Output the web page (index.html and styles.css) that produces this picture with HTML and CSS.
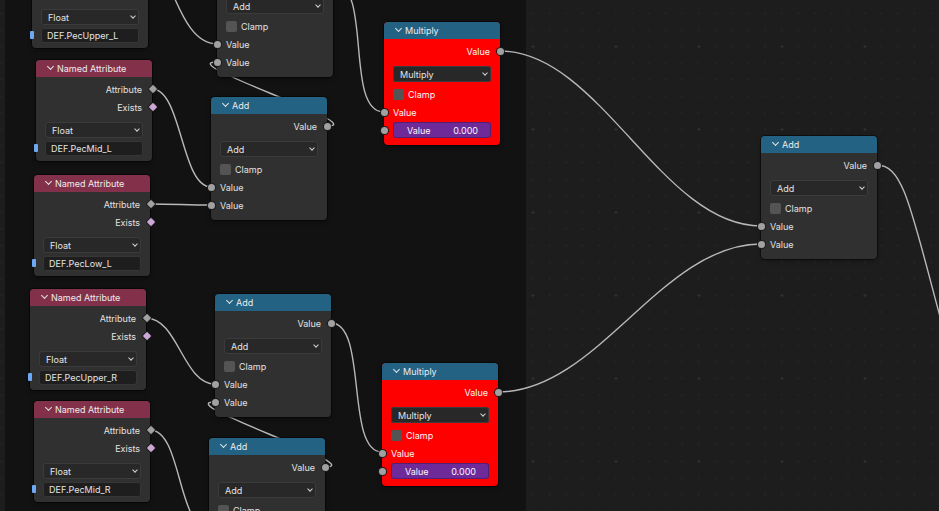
FILE: index.html
```html
<!DOCTYPE html>
<html lang="en">
  <head>
    <meta charset="utf-8">
    <title>Geometry Nodes</title>
    <link rel="stylesheet" href="styles.css">
  </head>
  <body>
    <div class="editor">
      <!-- frame behind the named attribute column -->
      <div class="frame"></div>

      <!-- links, drawn under the nodes -->
      <svg class="wires" width="939" height="511" viewBox="0 0 939 511">
        <path d="M170 -12 C180 10, 192 44, 217 44"/>
        <path d="M327 126 C372 126, 172 62, 217 62"/>
        <path d="M152 89 C182 89, 181 187, 211 187"/>
        <path d="M150 204 C175 204, 186 205, 211 205"/>
        <path d="M146 318 C178 318, 183 384, 215 384"/>
        <path d="M150 430 C182 430, 177 528, 209 528"/>
        <path d="M333 -17 C373 -17, 344 112, 384 112"/>
        <path d="M331 323 C368 323, 345 452, 382 452"/>
        <path d="M325 467 C370 467, 170 402, 215 402"/>
        <path d="M500 51 C600 51, 661 226, 761 226"/>
        <path d="M498 392 C598 392, 661 244, 761 244"/>
        <path d="M877 165 C905 165, 912 215, 945 335"/>
      </svg>

      <!-- Named Attribute nodes -->
      <div class="node named pec-upper-l">
        <div class="node-head"><span class="fold"></span>Named Attribute</div>
        <div class="node-body">
          <div class="row out">Attribute<i class="sock diamond"></i></div>
          <div class="row out">Exists<i class="sock diamond bool"></i></div>
          <div class="menu">Float</div>
          <div class="field"><i class="pin"></i>DEF.PecUpper_L</div>
        </div>
      </div>

      <div class="node named pec-mid-l">
        <div class="node-head"><span class="fold"></span>Named Attribute</div>
        <div class="node-body">
          <div class="row out">Attribute<i class="sock diamond"></i></div>
          <div class="row out">Exists<i class="sock diamond bool"></i></div>
          <div class="menu">Float</div>
          <div class="field"><i class="pin"></i>DEF.PecMid_L</div>
        </div>
      </div>

      <div class="node named pec-low-l">
        <div class="node-head"><span class="fold"></span>Named Attribute</div>
        <div class="node-body">
          <div class="row out">Attribute<i class="sock diamond"></i></div>
          <div class="row out">Exists<i class="sock diamond bool"></i></div>
          <div class="menu">Float</div>
          <div class="field"><i class="pin"></i>DEF.PecLow_L</div>
        </div>
      </div>

      <div class="node named pec-upper-r">
        <div class="node-head"><span class="fold"></span>Named Attribute</div>
        <div class="node-body">
          <div class="row out">Attribute<i class="sock diamond"></i></div>
          <div class="row out">Exists<i class="sock diamond bool"></i></div>
          <div class="menu">Float</div>
          <div class="field"><i class="pin"></i>DEF.PecUpper_R</div>
        </div>
      </div>

      <div class="node named pec-mid-r">
        <div class="node-head"><span class="fold"></span>Named Attribute</div>
        <div class="node-body">
          <div class="row out">Attribute<i class="sock diamond"></i></div>
          <div class="row out">Exists<i class="sock diamond bool"></i></div>
          <div class="menu">Float</div>
          <div class="field"><i class="pin"></i>DEF.PecMid_R</div>
        </div>
      </div>

      <!-- Math: Add -->
      <div class="node math add-1">
        <div class="node-head"><span class="fold"></span>Add</div>
        <div class="node-body">
          <div class="row out">Value<i class="sock"></i></div>
          <div class="menu">Add</div>
          <div class="row check"><span class="box"></span>Clamp</div>
          <div class="row in"><i class="sock"></i>Value</div>
          <div class="row in"><i class="sock"></i>Value</div>
        </div>
      </div>

      <div class="node math add-2">
        <div class="node-head"><span class="fold"></span>Add</div>
        <div class="node-body">
          <div class="row out">Value<i class="sock"></i></div>
          <div class="menu">Add</div>
          <div class="row check"><span class="box"></span>Clamp</div>
          <div class="row in"><i class="sock"></i>Value</div>
          <div class="row in"><i class="sock"></i>Value</div>
        </div>
      </div>

      <div class="node math add-3">
        <div class="node-head"><span class="fold"></span>Add</div>
        <div class="node-body">
          <div class="row out">Value<i class="sock"></i></div>
          <div class="menu">Add</div>
          <div class="row check"><span class="box"></span>Clamp</div>
          <div class="row in"><i class="sock"></i>Value</div>
          <div class="row in"><i class="sock"></i>Value</div>
        </div>
      </div>

      <div class="node math add-4">
        <div class="node-head"><span class="fold"></span>Add</div>
        <div class="node-body">
          <div class="row out">Value<i class="sock"></i></div>
          <div class="menu">Add</div>
          <div class="row check"><span class="box"></span>Clamp</div>
          <div class="row in"><i class="sock"></i>Value</div>
          <div class="row in"><i class="sock"></i>Value</div>
        </div>
      </div>

      <div class="node math add-sum">
        <div class="node-head"><span class="fold"></span>Add</div>
        <div class="node-body">
          <div class="row out">Value<i class="sock"></i></div>
          <div class="menu">Add</div>
          <div class="row check"><span class="box"></span>Clamp</div>
          <div class="row in"><i class="sock"></i>Value</div>
          <div class="row in"><i class="sock"></i>Value</div>
        </div>
      </div>

      <!-- Math: Multiply (custom red colour) -->
      <div class="node math tint mul-l">
        <div class="node-head"><span class="fold"></span>Multiply</div>
        <div class="node-body">
          <div class="row out">Value<i class="sock"></i></div>
          <div class="menu">Multiply</div>
          <div class="row check"><span class="box"></span>Clamp</div>
          <div class="row in"><i class="sock"></i>Value</div>
          <div class="row in"><i class="sock"></i><div class="slider"><span>Value</span><span>0.000</span></div></div>
        </div>
      </div>

      <div class="node math tint mul-r">
        <div class="node-head"><span class="fold"></span>Multiply</div>
        <div class="node-body">
          <div class="row out">Value<i class="sock"></i></div>
          <div class="menu">Multiply</div>
          <div class="row check"><span class="box"></span>Clamp</div>
          <div class="row in"><i class="sock"></i>Value</div>
          <div class="row in"><i class="sock"></i><div class="slider"><span>Value</span><span>0.000</span></div></div>
        </div>
      </div>
    </div>
  </body>
</html>
```

FILE: styles.css
```css
*{
  box-sizing: border-box;
}

body{
  margin: 0;
  background: #1d1d1d;
  font-family: Inter, "DejaVu Sans", sans-serif;
  font-size: 9px;
  color: #e2e2e2;
  overflow: hidden;
}

/* Canvas with the dotted grid, a bigger dot every fifth step */
.editor{
  position: relative;
  width: 939px;
  height: 511px;
  overflow: hidden;
  background-color: #1d1d1d;
  background-image:
    radial-gradient(circle, #303030 1px, transparent 1.5px),
    radial-gradient(circle, #262626 0.8px, transparent 1.2px);
  background-size: 83px 83px, 16.6px 16.6px;
  background-position: -6.5px 5px, -6.5px 5px;
}

.frame{
  position: absolute;
  left: 5px;
  top: -10px;
  width: 521px;
  height: 540px;
  background: #121212;
}

.wires{
  position: absolute;
  left: 0;
  top: 0;
  overflow: visible;
}

.wires path{
  fill: none;
  stroke: #b8b8b8;
  stroke-width: 1.4;
}

/* Nodes */
.node{
  position: absolute;
  width: 116px;
  background: #303030;
  border-radius: 4px;
  box-shadow: 0 0 0 1px rgba(0,0,0,.45), 0 2px 5px rgba(0,0,0,.3);
}

.node-head{
  position: relative;
  height: 17px;
  display: flex;
  align-items: center;
  padding-left: 21px;
  border-radius: 4px 4px 0 0;
  color: #ececec;
}

.named .node-head{
  background: #83314a;
}

.math .node-head{
  background: #246283;
}

.fold{
  position: absolute;
  left: 11.5px;
  top: 3.5px;
  width: 5px;
  height: 5px;
  border-right: 1px solid #e4e4e4;
  border-bottom: 1px solid #e4e4e4;
  transform: rotate(45deg);
}

.node-body{
  padding: 3px 0 5px;
}

.math .node-body{
  padding-bottom: 6px;
}

.tint{
  background: #ff0000;
  color: #f6f6f6;
}

.row{
  position: relative;
  height: 18px;
  display: flex;
  align-items: center;
  padding: 0 10px 0 9px;
}

.row.out{
  justify-content: flex-end;
}

/* Sockets sit on the node edge */
.sock{
  position: absolute;
  top: 50%;
  width: 7px;
  height: 7px;
  margin-top: -3.5px;
  border-radius: 50%;
  background: #a1a1a1;
  box-shadow: 0 0 0 1px #1c1c1c;
}

.row.out .sock{
  right: -3.5px;
}

.row.in .sock{
  left: -3.5px;
}

.sock.diamond{
  width: 6px;
  height: 6px;
  margin-top: -3px;
  right: -3px;
  border-radius: 1px;
  transform: rotate(45deg);
}

.sock.bool{
  background: #cca6d6;
}

/* Dropdowns */
.menu{
  position: relative;
  height: 16px;
  margin: 6px 9px 0;
  padding-left: 7px;
  display: flex;
  align-items: center;
  background: #282828;
  border-radius: 3px;
  box-shadow: inset 0 0 0 1px #3b3b3b;
  color: #e4e4e4;
}

.menu::after{
  content: '';
  position: absolute;
  right: 4.5px;
  top: 5px;
  width: 3px;
  height: 3px;
  border-right: 1px solid #d2d2d2;
  border-bottom: 1px solid #d2d2d2;
  transform: rotate(45deg);
}

/* Name text field with its hidden string socket */
.field{
  position: relative;
  height: 15px;
  margin: 3px 9px 0;
  padding-left: 6px;
  display: flex;
  align-items: center;
  background: #1e1e1e;
  border-radius: 3px;
  box-shadow: inset 0 0 0 1px #363636;
  color: #e4e4e4;
}

.pin{
  position: absolute;
  left: -11px;
  top: 3px;
  width: 4px;
  height: 8px;
  border-radius: 1px;
  background: #6ea8f5;
}

.check{
  margin-top: 3px;
}

.box{
  width: 11px;
  height: 11px;
  margin-right: 4px;
  border-radius: 2px;
  background: #545454;
}

.slider{
  flex: 1;
  height: 16px;
  display: flex;
  align-items: center;
  justify-content: space-between;
  padding: 0 13px 0 14px;
  margin-right: -1px;
  background: #6f2a99;
  border-radius: 3px;
  box-shadow: inset 0 0 0 1px rgba(0,0,0,.25);
}

/* Node placement on the canvas */
.pec-upper-l{ left: 32px; top: -53px; }
.pec-mid-l{ left: 36px; top: 60px; }
.pec-low-l{ left: 34px; top: 175px; }
.pec-upper-r{ left: 30px; top: 289px; }
.pec-mid-r{ left: 34px; top: 401px; }

.add-1{ left: 217px; top: -46px; }
.add-2{ left: 211px; top: 97px; }
.add-3{ left: 215px; top: 294px; }
.add-4{ left: 209px; top: 438px; }
.add-sum{ left: 761px; top: 136px; }

.mul-l{ left: 384px; top: 22px; }
.mul-r{ left: 382px; top: 363px; }
```
